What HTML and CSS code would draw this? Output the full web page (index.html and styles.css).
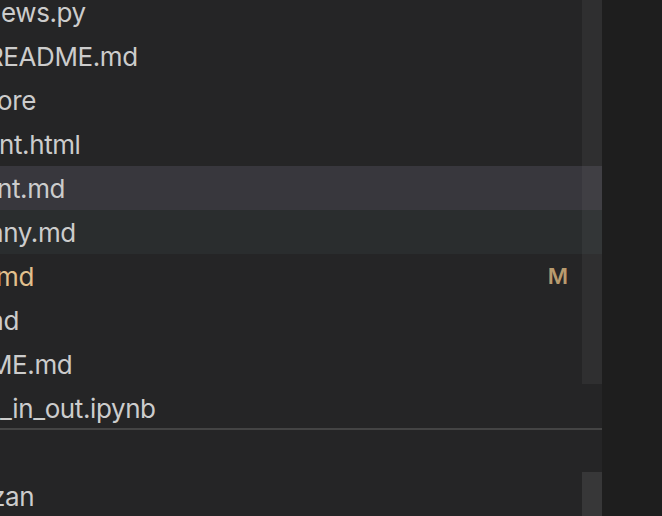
FILE: index.html
```html
<!DOCTYPE html>
<html>
<head>
<meta charset="utf-8">
<link rel="stylesheet" href="styles.css">
</head>
<body>
<div class="sidebar">
  <div class="pane pane-files">
    <div class="tree">
      <div class="row"><span class="label l-news">news.py</span></div>
      <div class="row"><span class="label l-readme">README.md</span></div>
      <div class="row"><span class="label l-ore">ore</span></div>
      <div class="row"><span class="label l-nth">nt.html</span></div>
      <div class="row hover"><span class="label l-ntm">nt.md</span></div>
      <div class="row selected"><span class="label l-any">any.md</span></div>
      <div class="row modified"><span class="label l-md">md</span><span class="badge">M</span></div>
      <div class="row"><span class="label l-nd">md</span></div>
      <div class="row"><span class="label l-me">ME.md</span></div>
      <div class="row"><span class="label l-io">_in_out.ipynb</span></div>
    </div>
    <div class="scrollbar s1"></div>
  </div>
  <div class="pane pane-second">
    <div class="pane-header"></div>
    <div class="row"><span class="label l-zan">zan</span></div>
    <div class="scrollbar s2"></div>
  </div>
</div>
<div class="editor"></div>
</body>
</html>
```

FILE: styles.css
```css
html, body {
  margin: 0;
  padding: 0;
  height: 100%;
}
body {
  background: #1e1e1e;
  display: flex;
  overflow: hidden;
  font-family: Inter, "Liberation Sans", sans-serif;
}
.sidebar {
  width: 602px;
  flex: none;
  height: 516px;
  background: #252526;
  display: flex;
  flex-direction: column;
  overflow: hidden;
}
.editor {
  flex: 1;
  background: #1e1e1e;
}
.pane {
  position: relative;
  overflow: hidden;
}
.pane-files {
  height: 428px;
  flex: none;
}
.tree {
  margin-top: -10px;
}
.row {
  height: 44px;
  display: flex;
  align-items: center;
  justify-content: space-between;
  padding-right: 34px;
  color: #cccccc;
  font-size: 26px;
  letter-spacing: -0.4px;
  white-space: nowrap;
}
.row.hover {
  background: #38373d;
}
.row.selected {
  background: #2a2d2e;
}
.row.modified {
  color: #e2c08d;
}
.badge {
  font-size: 22px;
  font-weight: 600;
  letter-spacing: 0;
  color: #b89b6e;
}
.label {
  display: block;
}
.l-news { margin-left: -14px; }
.l-readme { margin-left: -13px; }
.l-ore { margin-left: -3px; }
.l-nth { margin-left: -1px; }
.l-ntm { margin-left: -3px; }
.l-any { margin-left: -11px; }
.l-md { margin-left: -4px; }
.l-nd { margin-left: -19px; }
.l-me { margin-left: -11px; }
.l-io { margin-left: 0; }
.l-zan { margin-left: -9px; }
.pane-second {
  flex: 1;
  border-top: 2px solid #444444;
}
.pane-header {
  height: 44px;
}
.scrollbar {
  position: absolute;
  right: 0;
  width: 20px;
}
.s1 {
  top: 0;
  height: 384px;
  background: rgba(121, 121, 121, 0.12);
}
.s2 {
  top: 42px;
  bottom: 0;
  background: rgba(121, 121, 121, 0.22);
}
```
